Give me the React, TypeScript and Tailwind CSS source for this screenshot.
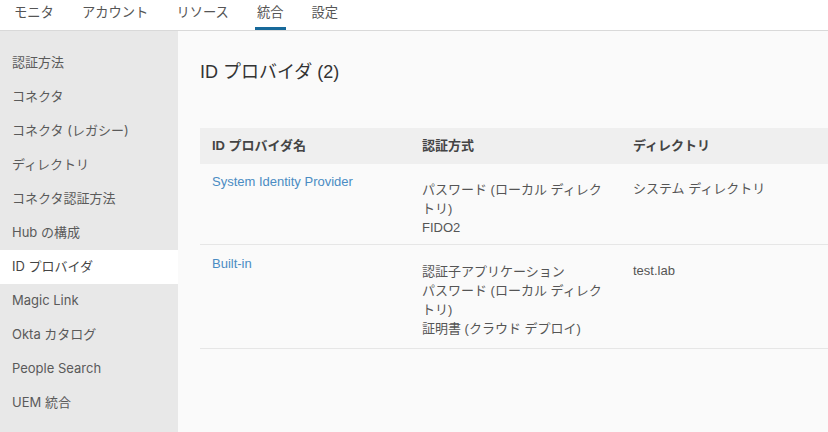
import React from "react";

const tabs = ["モニタ", "アカウント", "リソース", "統合", "設定"];
const side = [
  "認証方法",
  "コネクタ",
  "コネクタ (レガシー)",
  "ディレクトリ",
  "コネクタ認証方法",
  "Hub の構成",
  "ID プロバイダ",
  "Magic Link",
  "Okta カタログ",
  "People Search",
  "UEM 統合",
];

const rows = [
  {
    name: "System Identity Provider",
    auth: ["パスワード (ローカル ディレクトリ)", "FIDO2"],
    dir: "システム ディレクトリ",
  },
  {
    name: "Built-in",
    auth: ["認証子アプリケーション", "パスワード (ローカル ディレクトリ)", "証明書 (クラウド デプロイ)"],
    dir: "test.lab",
  },
];

const jp = { fontFamily: '"Liberation Sans", "Noto Sans CJK JP", sans-serif' };
const sideFont = { fontFamily: 'Inter, "Noto Sans CJK JP", sans-serif' };

export default function App() {
  return (
    <div className="w-[828px] h-[432px] overflow-hidden flex flex-col bg-[#fafafa]" style={jp}>
      <div className="h-[31px] shrink-0 bg-white border-b border-[#d9d9d9] flex items-stretch pl-[12px] gap-[24px]">
        {tabs.map((t) => (
          <div
            key={t}
            className={
              "px-[2px] flex items-start pt-[3px] text-[13.3px] leading-[20px] text-[#555] border-b-[3px] " +
              (t === "統合" ? "border-[#17699a] text-[#333]" : "border-transparent")
            }
          >
            {t}
          </div>
        ))}
      </div>
      <div className="flex flex-1 min-h-0">
        <div className="w-[178px] shrink-0 bg-[#e8e8e8] pt-[15px]" style={sideFont}>
          {side.map((s) => (
            <div
              key={s}
              className={
                "h-[34px] flex items-center px-[12px] text-[13px] text-[#5a5a5a] " +
                (s === "ID プロバイダ" ? "bg-white text-[#444]" : "")
              }
            >
              {s}
            </div>
          ))}
        </div>
        <div className="flex-1 min-w-0 pl-[22px] pt-[29px]">
          <div className="text-[18px] leading-[24px] text-[#333]">ID プロバイダ (2)</div>
          <div className="mt-[44px] w-[650px]">
            <div className="grid grid-cols-[210px_211px_1fr] h-[36px] bg-[#efefef] items-center text-[13px] font-bold text-[#444]">
              <div className="px-[12px]">ID プロバイダ名</div>
              <div className="px-[12px]">認証方式</div>
              <div className="px-[12px]">ディレクトリ</div>
            </div>
            {rows.map((r, i) => (
              <div
                key={r.name}
                className={
                  "grid grid-cols-[210px_211px_1fr] border-b border-[#e6e6e6] text-[13px] leading-[19px] " +
                  (i === 0 ? "pt-[8px] pb-[7px]" : "pt-[9px] pb-[10px]")
                }
              >
                <div className="px-[12px] text-[#4a8cc3]">{r.name}</div>
                <div className="px-[12px] mt-[8px] text-[#555] pr-[16px]">
                  {r.auth.map((a) => (
                    <div key={a}>{a}</div>
                  ))}
                </div>
                <div className="px-[12px] mt-[7px] text-[#555]">{r.dir}</div>
              </div>
            ))}
          </div>
        </div>
      </div>
    </div>
  );
}
